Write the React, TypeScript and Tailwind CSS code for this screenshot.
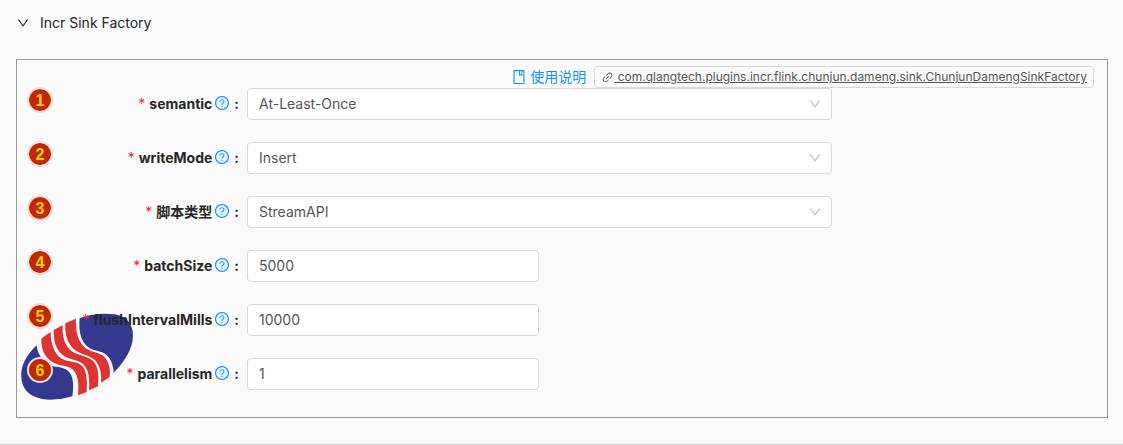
import { useState } from "react";
import { AiOutlineBook, AiOutlineDown, AiOutlineLink, AiOutlineQuestionCircle } from "react-icons/ai";

type Field = {
  id: string;
  label: string;
  value: string;
  options?: string[];
};

const fields: Field[] = [
  { id: "semantic", label: "semantic", value: "At-Least-Once", options: ["At-Least-Once", "Exactly-Once"] },
  { id: "writeMode", label: "writeMode", value: "Insert", options: ["Insert", "Update", "Replace"] },
  { id: "scriptType", label: "脚本类型", value: "StreamAPI", options: ["StreamAPI", "SQL"] },
  { id: "batchSize", label: "batchSize", value: "5000" },
  { id: "flushIntervalMills", label: "flushIntervalMills", value: "10000" },
  { id: "parallelism", label: "parallelism", value: "1" },
];

function Logo() {
  return (
    <svg viewBox="30 50 345 270" aria-hidden="true" className="pointer-events-none absolute bottom-[15px] left-[3px] h-[90px] w-[115px]">
      <g fill="#32398e">
        <path d="M80 150C48 180 31 213 34 248C38 290 70 312 120 313C145 313 168 309 187 303C191 275 191 250 181 235C172 220 155 216 130 213C100 203 82 178 80 150Z" />
        <path d="M209 68C243 56 279 52 314 57C350 63 370 88 369 123C367 163 344 199 311 232C310 208 301 185 282 174C267 165 249 167 234 155C212 138 205 106 209 68Z" />
      </g>
      <g fill="#dc3433">
        <path d="M94 130Q107 119 122 110C122 140 129 166 147 184C165 201 195 195 213 209C231 223 232 256 230 290L204 300C207 268 205 236 187 221C170 208 143 213 121 196C101 180 93 155 94 130Z" />
        <path d="M131 104L158 90C156 119 162 146 180 163C199 181 228 179 246 194C266 211 267 240 264 273L237 285C239 254 238 225 220 207C201 190 177 194 157 178C136 160 130 133 131 104Z" />
        <path d="M166 84L198 70C196 101 202 132 219 151C236 171 263 168 281 183C297 198 302 222 299 245L273 262C275 236 271 212 255 195C238 178 211 179 192 162C171 143 164 115 166 84Z" />
      </g>
    </svg>
  );
}

function FieldRow({ field, index }: { field: Field; index: number }) {
  const [value, setValue] = useState(field.value);
  return (
    <div className="flex h-8 items-center">
      <div className="flex w-[230px] shrink-0 items-center pl-[10px]">
        <span className="-mt-2 flex size-[26px] shrink-0 items-center justify-center rounded-full border-2 border-[#f3dfdc] bg-[#c22800] bg-clip-padding pt-0.5 font-['Liberation_Sans',sans-serif] text-base leading-none font-bold text-[#ffcf00]">
          {index + 1}
        </span>
        <div className="-ml-6 flex flex-1 items-center justify-end pr-2 font-bold">
          <span className="mr-1 font-normal text-[#ff2638]" aria-hidden="true">*</span>
          <label htmlFor={field.id}>{field.label}</label>
          <button
            type="button"
            aria-label={`${field.label} help`}
            className="-mt-0.5 mr-1 ml-0.5 bg-[radial-gradient(circle,#e6f7ff_6px,transparent_7px)] text-[#1890ff]"
          >
            <AiOutlineQuestionCircle className="size-4" />
          </button>
          <span>:</span>
        </div>
      </div>
      {field.options ? (
        <div className="relative w-[585px] min-w-0">
          <select
            id={field.id}
            value={value}
            onChange={(e) => setValue(e.target.value)}
            className="block h-8 w-full appearance-none rounded border border-[#d9d9d9] bg-white px-[11px] text-[#555]"
          >
            {field.options.map((o) => (
              <option key={o}>{o}</option>
            ))}
          </select>
          <AiOutlineDown className="pointer-events-none absolute top-[9px] right-[10px] size-[14px] text-[#bfbfbf]" />
        </div>
      ) : (
        <input
          id={field.id}
          value={value}
          onChange={(e) => setValue(e.target.value)}
          className="h-8 w-[292px] min-w-0 rounded border border-[#d9d9d9] bg-white px-[11px] pb-0.5 text-[#555]"
        />
      )}
    </div>
  );
}

export default function App() {
  const [open, setOpen] = useState(true);
  return (
    <section className="border-b border-[#d9d9d9] bg-[#fafafa] pr-[15px] pb-[26px] pl-4 font-[Inter,'Noto_Sans_CJK_SC',sans-serif] text-sm leading-[22px] text-[#262626]">
      <button type="button" aria-expanded={open} onClick={() => setOpen(!open)} className="flex w-full items-center gap-[10px] py-3 text-left">
        <AiOutlineDown className="size-[14px]" />
        Incr Sink Factory
      </button>
      {open && (
        <div className="relative mt-[13px] border border-[#999] pt-[6px] pb-[27px]">
          <Logo />
          <div className="relative">
            <div className="flex h-[22px] items-center justify-end gap-2 pr-[13px]">
              <a href="#guide" className="flex items-center gap-[3px] text-[#1890ff]">
                <AiOutlineBook className="size-4" />
                使用说明
              </a>
              <a href="#plugin" className="flex h-[22px] items-center rounded border border-[#d9d9d9] px-[6px] text-xs text-[#555]">
                <AiOutlineLink className="size-[13px]" />
                <span className="whitespace-pre underline"> com.qlangtech.plugins.incr.flink.chunjun.dameng.sink.ChunjunDamengSinkFactory</span>
              </a>
            </div>
            <form className="flex flex-col gap-[22px]">
              {fields.map((field, i) => (
                <FieldRow key={field.id} field={field} index={i} />
              ))}
            </form>
          </div>
        </div>
      )}
    </section>
  );
}
